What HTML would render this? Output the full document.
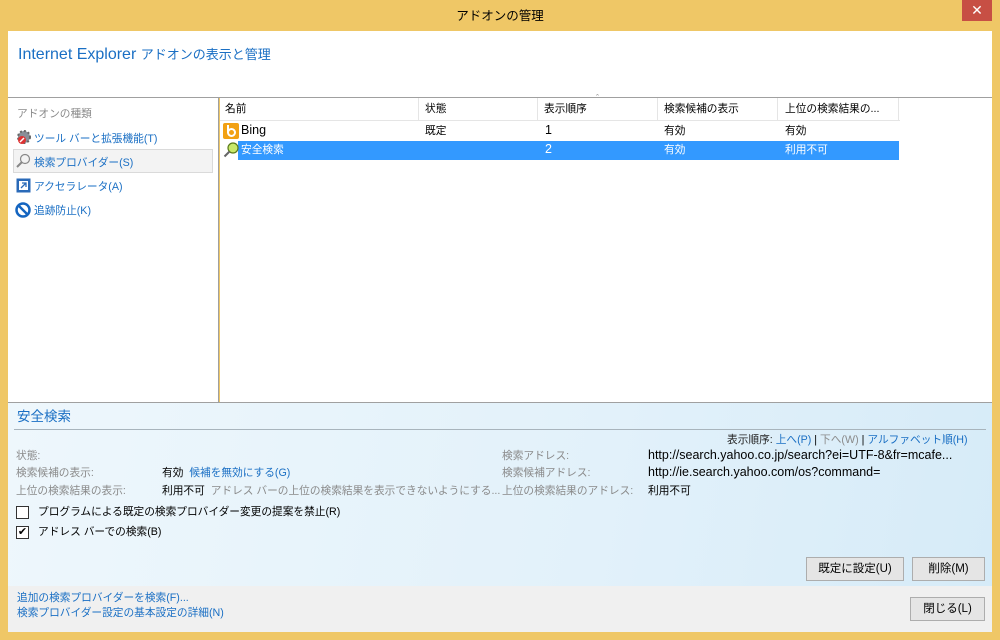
<!DOCTYPE html>
<html><head><meta charset="utf-8"><style>
*{margin:0;padding:0;box-sizing:border-box}
body{width:1000px;height:640px;background:#efc766;position:relative;overflow:hidden;font-family:"Liberation Sans","Noto Sans CJK JP",sans-serif;font-size:10.7px;line-height:19px;color:#000}
.a{position:absolute;white-space:nowrap}
.blue{color:#1a6fc4}
.gray{color:#8a8a8a}
.L{font-size:12.5px}
.btn{position:absolute;border:1px solid #adadad;background:#e5e5e5;text-align:center;line-height:23px;font-size:11.5px}
</style></head><body>
<div class="a" style="left:0;top:7px;width:1000px;text-align:center;font-size:12.5px">アドオンの管理</div>
<div class="a" style="left:962px;top:0;width:30px;height:21px;background:#c74f44;color:#fff;text-align:center;font-size:14px;line-height:20px">✕</div>
<!-- header -->
<div class="a" style="left:8px;top:31px;width:984px;height:67px;background:#fff;border-bottom:1px solid #a0a0a0"></div>
<div class="a blue" style="left:18px;top:45px;font-size:13px;line-height:20px"><span style="font-size:16px">Internet Explorer </span>アドオンの表示と管理</div>
<!-- left panel -->
<div class="a" style="left:8px;top:98px;width:211px;height:304px;background:#fff;border-right:1px solid #a0a0a0"></div>
<div class="a gray" style="left:17px;top:105px">アドオンの種類</div>
<div class="a" style="left:13px;top:149px;width:200px;height:24px;background:#f3f3f3;border:1px solid #dadada"></div>
<svg class="a" style="left:16px;top:129px" width="16" height="16"><circle cx="8" cy="8" r="6" fill="#8a8f98" stroke="#666" stroke-width="2" stroke-dasharray="2 2"/><circle cx="6" cy="11" r="4" fill="#d33"/><path d="M4 13l4-4" stroke="#fff" stroke-width="1.5"/></svg>
<div class="a blue" style="left:34px;top:130px">ツール バーと拡張機能(T)</div>
<svg class="a" style="left:15px;top:153px" width="16" height="16"><circle cx="10" cy="6" r="4.5" fill="none" stroke="#888" stroke-width="1.2"/><path d="M7 9l-5 5" stroke="#888" stroke-width="2"/></svg>
<div class="a blue" style="left:34px;top:154px">検索プロバイダー(S)</div>
<svg class="a" style="left:16px;top:178px" width="15" height="15"><rect x="0.5" y="0.5" width="14" height="14" fill="#2a6ab8"/><rect x="3" y="3" width="9" height="9" fill="#fff"/><path d="M5 10l5-5M6 5h4v4" stroke="#2a6ab8" stroke-width="1.3" fill="none"/></svg>
<div class="a blue" style="left:34px;top:178px">アクセラレータ(A)</div>
<svg class="a" style="left:15px;top:202px" width="16" height="16"><circle cx="8" cy="8" r="6.5" fill="none" stroke="#1565c0" stroke-width="2.5"/><path d="M3.5 3.5l9 9" stroke="#1565c0" stroke-width="2.5"/></svg>
<div class="a blue" style="left:34px;top:202px">追跡防止(K)</div>
<!-- list -->
<div class="a" style="left:220px;top:98px;width:772px;height:304px;background:#fff"></div>
<div class="a" style="left:220px;top:120px;width:680px;height:1px;background:#e5e5e5"></div>
<div class="a" style="left:418px;top:98px;width:1px;height:22px;background:#e5e5e5"></div>
<div class="a" style="left:537px;top:98px;width:1px;height:22px;background:#e5e5e5"></div>
<div class="a" style="left:657px;top:98px;width:1px;height:22px;background:#e5e5e5"></div>
<div class="a" style="left:777px;top:98px;width:1px;height:22px;background:#e5e5e5"></div>
<div class="a" style="left:898px;top:98px;width:1px;height:22px;background:#e5e5e5"></div>
<div class="a" style="left:225px;top:100px">名前</div>
<div class="a" style="left:425px;top:100px">状態</div>
<div class="a" style="left:544px;top:100px">表示順序</div>
<div class="a" style="left:596px;top:94px;font-size:9px;line-height:9px;color:#888">ˆ</div>
<div class="a" style="left:664px;top:100px">検索候補の表示</div>
<div class="a" style="left:785px;top:100px">上位の検索結果の...</div>
<svg class="a" style="left:223px;top:123px" width="16" height="16"><rect width="16" height="16" rx="2" fill="#f2a114"/><circle cx="8.5" cy="9.5" r="3.5" fill="none" stroke="#fff" stroke-width="2"/><path d="M5 2v8" stroke="#fff" stroke-width="2"/></svg>
<div class="a L" style="left:241px;top:121px">Bing</div>
<div class="a" style="left:425px;top:122px">既定</div>
<div class="a L" style="left:545px;top:121px">1</div>
<div class="a" style="left:664px;top:122px">有効</div>
<div class="a" style="left:785px;top:122px">有効</div>
<div class="a" style="left:238px;top:141px;width:661px;height:19px;background:#3399ff"></div>
<svg class="a" style="left:223px;top:142px" width="16" height="16"><circle cx="10" cy="6" r="5" fill="#c8e86a" stroke="#5a7a1a" stroke-width="1.2"/><path d="M6.5 9.5l-5 5" stroke="#666" stroke-width="2"/></svg>
<div class="a" style="left:241px;top:141px;color:#fff">安全検索</div>
<div class="a L" style="left:545px;top:140px;color:#fff">2</div>
<div class="a" style="left:664px;top:141px;color:#fff">有効</div>
<div class="a" style="left:785px;top:141px;color:#fff">利用不可</div>
<!-- details -->
<div class="a" style="left:8px;top:402px;width:984px;height:184px;background:linear-gradient(100deg,#eef7fc 0%,#e2f1fa 60%,#d6ebf8 100%);border-top:1px solid #a0a0a0"></div>
<div class="a blue" style="left:17px;top:406px;font-size:13.5px;line-height:21px">安全検索</div>
<div class="a" style="left:14px;top:429px;width:972px;height:1px;background:#a8b4bc"></div>
<div class="a" style="left:727px;top:431px"><span style="color:#222">表示順序: </span><span class="blue">上へ(P)</span> | <span class="gray">下へ(W)</span> | <span class="blue">アルファベット順(H)</span></div>
<div class="a gray" style="left:16px;top:447px">状態:</div>
<div class="a gray" style="left:16px;top:464px">検索候補の表示:</div>
<div class="a gray" style="left:16px;top:482px">上位の検索結果の表示:</div>
<div class="a" style="left:162px;top:464px">有効 <span class="blue">&nbsp;候補を無効にする(G)</span></div>
<div class="a" style="left:162px;top:482px">利用不可 <span class="gray">&nbsp;アドレス バーの上位の検索結果を表示できないようにする...</span></div>
<div class="a gray" style="left:502px;top:447px">検索アドレス:</div>
<div class="a gray" style="left:502px;top:464px">検索候補アドレス:</div>
<div class="a gray" style="left:502px;top:482px">上位の検索結果のアドレス:</div>
<div class="a L" style="left:648px;top:446px">http://search.yahoo.co.jp/search?ei=UTF-8&amp;fr=mcafe...</div>
<div class="a L" style="left:648px;top:463px">http://ie.search.yahoo.com/os?command=</div>
<div class="a" style="left:648px;top:482px">利用不可</div>
<div class="a" style="left:16px;top:506px;width:13px;height:13px;border:1px solid #333;background:#fff"></div>
<div class="a" style="left:38px;top:503px">プログラムによる既定の検索プロバイダー変更の提案を禁止(R)</div>
<div class="a" style="left:16px;top:526px;width:13px;height:13px;border:1px solid #333;background:#fff;font-size:11px;line-height:11px;text-align:center">✔</div>
<div class="a" style="left:38px;top:523px">アドレス バーでの検索(B)</div>
<div class="btn" style="left:806px;top:557px;width:98px;height:24px">既定に設定(U)</div>
<div class="btn" style="left:912px;top:557px;width:73px;height:24px">削除(M)</div>
<!-- footer -->
<div class="a" style="left:8px;top:586px;width:984px;height:46px;background:#f0f0f0"></div>
<div class="a blue" style="left:17px;top:589px">追加の検索プロバイダーを検索(F)...</div>
<div class="a blue" style="left:17px;top:604px">検索プロバイダー設定の基本設定の詳細(N)</div>
<div class="btn" style="left:910px;top:597px;width:75px;height:24px">閉じる(L)</div>
</body></html>
